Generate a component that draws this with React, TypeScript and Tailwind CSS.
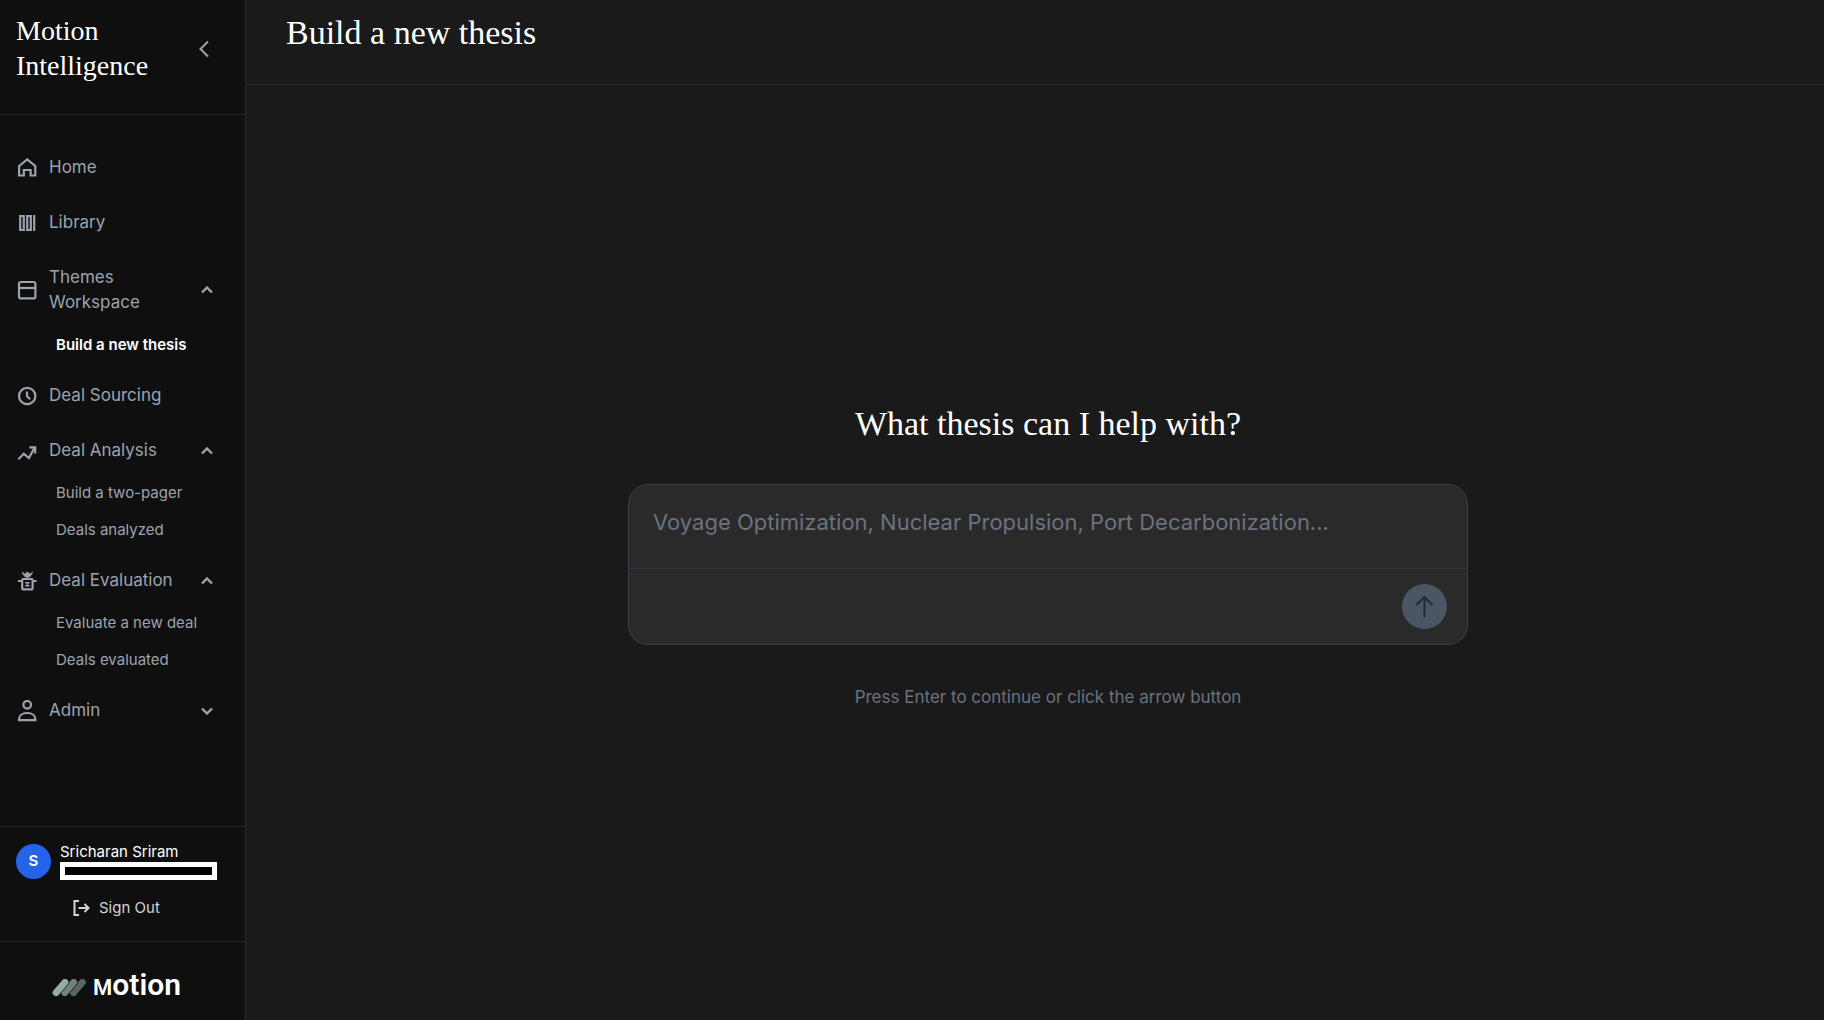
import { useState, type FormEvent, type KeyboardEvent, type ReactNode } from "react";

type NavItem = {
  label: string;
  icon: ReactNode;
  expanded?: boolean;
  children?: { label: string; active?: boolean }[];
};

function NavIcon({ children }: { children: ReactNode }) {
  return (
    <svg
      viewBox="0 0 22 22"
      className="h-[22px] w-[22px] shrink-0"
      fill="none"
      stroke="currentColor"
      strokeWidth="2.2"
      aria-hidden="true"
    >
      {children}
    </svg>
  );
}

const NAV_ITEMS: NavItem[] = [
  {
    label: "Home",
    icon: (
      <NavIcon>
        <path d="M3.1 9 11.2 2.4l8.1 6.6v9.5h-4.7V13H7.8v5.500H3.100z" />
      </NavIcon>
    ),
  },
  {
    label: "Library",
    icon: (
      <NavIcon>
        <path d="M4.2 4h3.6v14H4.2zM11.2 4h3.6v14h-3.6zM18.2 3v16" />
      </NavIcon>
    ),
  },
  {
    label: "Themes Workspace",
    icon: (
      <NavIcon>
        <rect x="3" y="3" width="16.4" height="16.4" rx="2" />
        <path d="M3 9h16.4" />
      </NavIcon>
    ),
    expanded: true,
    children: [{ label: "Build a new thesis", active: true }],
  },
  {
    label: "Deal Sourcing",
    icon: (
      <NavIcon>
        <circle cx="11.2" cy="11" r="8.2" />
        <path d="M11 6.5V11l3 3.2" />
      </NavIcon>
    ),
  },
  {
    label: "Deal Analysis",
    icon: (
      <NavIcon>
        <path d="m2.4 19.2 5.4-5.4 5.2 4.200 5.600-10.400" />
        <path d="M13.400 7.400h5.800v6" />
      </NavIcon>
    ),
    expanded: true,
    children: [{ label: "Build a two-pager" }, { label: "Deals analyzed" }],
  },
  {
    label: "Deal Evaluation",
    icon: (
      <NavIcon>
        <rect x="6.2" y="9" width="10.4" height="10.4" rx="1" />
        <path d="M2 11h4.2M16.6 11h4" />
        <path
          d="M6.2 2.2 8.8 4.2 11.4 2.2 14 4.2 16.6 2.2 14 6.6 11.4 7.2 8.8 6.6zM11.4 7v2"
          fill="currentColor"
          strokeWidth="1"
        />
        <path d="M9.2 12.8h4.4M9.2 15.8h4.4M11.4 12v4.6" strokeWidth="1.4" />
      </NavIcon>
    ),
    expanded: true,
    children: [{ label: "Evaluate a new deal" }, { label: "Deals evaluated" }],
  },
  {
    label: "Admin",
    icon: (
      <NavIcon>
        <circle cx="11.2" cy="4.8" r="3.8" />
        <path d="M3 20.2v-1c0-3.600 3.200-6.200 8.200-6.200s8.200 2.600 8.200 6.200v1z" />
      </NavIcon>
    ),
    expanded: false,
    children: [],
  },
];

function Caret({ up }: { up?: boolean }) {
  return (
    <svg
      viewBox="0 0 12 8"
      className="ml-auto h-2 w-3 shrink-0"
      fill="none"
      stroke="currentColor"
      strokeWidth="2.4"
      aria-hidden="true"
    >
      <path d={up ? "m1 6.5 5-5 5 5" : "m1 1.5 5 5 5-5"} />
    </svg>
  );
}

function NavRow({ item }: { item: NavItem }) {
  const [open, setOpen] = useState(item.expanded ?? false);
  const rowClass =
    "flex w-full items-center gap-[11px] py-[11px] pl-4 pr-8 text-left text-[17px] leading-[25px] hover:text-white";

  if (!item.children) {
    return (
      <li>
        <a href="#" className={rowClass}>
          {item.icon}
          {item.label}
        </a>
      </li>
    );
  }

  return (
    <li>
      <button
        type="button"
        aria-expanded={open}
        onClick={() => setOpen(!open)}
        className={rowClass}
      >
        {item.icon}
        <span>{item.label}</span>
        <Caret up={open} />
      </button>
      {open && item.children.length > 0 ? (
        <ul className="mt-[2px] mb-[3px] flex flex-col gap-1 pl-14">
          {item.children.map((child) => (
            <li key={child.label}>
              <a
                href="#"
                className={`block py-[6px] text-[15px] leading-[21px] hover:text-white ${
                  child.active ? "font-semibold text-white" : ""
                }`}
              >
                {child.label}
              </a>
            </li>
          ))}
        </ul>
      ) : null}
    </li>
  );
}

function Logo() {
  return (
    <div className="flex items-center justify-center gap-[7px] pr-3">
      <svg viewBox="0 0 34 18" className="mt-[2px] h-[18px] w-[34px]" fill="none" aria-hidden="true">
        <g strokeWidth="6.8" strokeLinecap="round">
          <path d="M21.4 13.7l9-10.4" stroke="#586664" />
          <path d="M13.1 13.7l9-10.4" stroke="#0f0f0f" strokeWidth="7.4" />
          <path d="M12.7 13.7l9-10.4" stroke="#71827f" />
          <path d="M4.4 13.7l9-10.4" stroke="#0f0f0f" strokeWidth="7.4" />
          <path d="M4 13.7l9-10.4" stroke="#93aaa7" />
        </g>
      </svg>
      <span className="font-['Roboto',sans-serif] text-[30px] font-semibold leading-9 text-white">
        <span className="text-[22px]">M</span>otion
      </span>
    </div>
  );
}

function Sidebar() {
  return (
    <aside className="flex w-[246px] shrink-0 flex-col border-r border-[#1f2937] bg-[#0f0f0f] text-[#9ca3af]">
      <div className="flex items-start justify-between border-b border-[#1f2937] px-4 pt-[13px] pb-[31px]">
        <h1 className="font-['Liberation_Serif',serif] text-[28px] leading-[35px] text-white">
          Motion Intelligence
        </h1>
        <button type="button" aria-label="Collapse sidebar" className="mt-[26px] mr-[19px]">
          <svg
            viewBox="0 0 12 20"
            className="h-5 w-3"
            fill="none"
            stroke="currentColor"
            strokeWidth="2"
            aria-hidden="true"
          >
            <path d="M10 2.5 2.5 10l7.5 7.500" />
          </svg>
        </button>
      </div>

      <nav className="flex-1 pt-[29px]">
        <ul className="flex flex-col gap-2">
          {NAV_ITEMS.map((item) => (
            <NavRow key={item.label} item={item} />
          ))}
        </ul>
      </nav>

      <div className="border-t border-[#1f2937] px-4 pt-[15px] pb-[22px]">
        <div className="flex items-center gap-[9px]">
          <div className="flex h-[35px] w-[35px] shrink-0 items-center justify-center rounded-full bg-[#2563eb] text-[15px] font-semibold text-white">
            S
          </div>
          <div>
            <p className="text-[15px] leading-5 text-white">Sricharan Sriram</p>
            <div className="h-[18px] w-[157px] border-[5px] border-white bg-black" />
          </div>
        </div>
        <button
          type="button"
          className="mt-[17px] ml-14 flex items-center gap-[9px] text-[15px] leading-[22px] text-[#d1d5db]"
        >
          <svg
            viewBox="0 0 18 18"
            className="h-[18px] w-[18px]"
            fill="none"
            stroke="currentColor"
            strokeWidth="2"
            aria-hidden="true"
          >
            <path d="M7 2H2.500v14H7M6.500 9H16M12.500 5l4 4-4 4" />
          </svg>
          Sign Out
        </button>
      </div>

      <div className="border-t border-[#1f2937] pt-[25px] pb-[14px]">
        <Logo />
      </div>
    </aside>
  );
}

export default function App() {
  const [thesis, setThesis] = useState("");

  function handleSubmit(e: FormEvent) {
    e.preventDefault();
    setThesis("");
  }

  function handleKeyDown(e: KeyboardEvent<HTMLTextAreaElement>) {
    if (e.key === "Enter" && !e.shiftKey) handleSubmit(e);
  }

  return (
    <div className="flex min-h-screen bg-[#1a1a1a] font-['Inter',sans-serif]">
      <Sidebar />

      <main className="flex min-w-0 flex-1 flex-col">
        <header className="border-b border-[#1f2937] px-10 pt-[13px] pb-[31px]">
          <h2 className="font-['Liberation_Serif',serif] text-[34px] leading-10 text-white">
            Build a new thesis
          </h2>
        </header>

        <section className="flex flex-1 flex-col items-center justify-center pt-2 pl-[26px]">
          <h3 className="mb-10 font-['Liberation_Serif',serif] text-[34px] leading-10 text-white">
            What thesis can I help with?
          </h3>

          <form
            onSubmit={handleSubmit}
            className="w-full max-w-[840px] overflow-hidden rounded-[20px] border border-[#374151] bg-[#2a2a2a]"
          >
            <textarea
              rows={1}
              aria-label="Thesis"
              value={thesis}
              onChange={(e) => setThesis(e.target.value)}
              onKeyDown={handleKeyDown}
              placeholder="Voyage Optimization, Nuclear Propulsion, Port Decarbonization..."
              className="block h-[83px] w-full resize-none px-6 pt-[21px] text-[22px] leading-8 text-white outline-none placeholder:text-[#6b7280]"
            />
            <div className="flex justify-end border-t border-[#374151]/60 px-5 py-[15px]">
              <button
                type="submit"
                aria-label="Continue"
                className="flex h-[45px] w-[45px] items-center justify-center rounded-full bg-[#4b5563] text-[#1f2937]"
              >
                <svg
                  viewBox="0 0 24 24"
                  className="h-6 w-6"
                  fill="none"
                  stroke="currentColor"
                  strokeWidth="2"
                  strokeLinecap="round"
                  aria-hidden="true"
                >
                  <path d="M11.5 21.5V2M4 9.5 11.5 2l7.500 7.500" />
                </svg>
              </button>
            </div>
          </form>

          <p className="mt-10 text-[17px] leading-6 text-[#6b7280]">
            Press Enter to continue or click the arrow button
          </p>
        </section>
      </main>
    </div>
  );
}
